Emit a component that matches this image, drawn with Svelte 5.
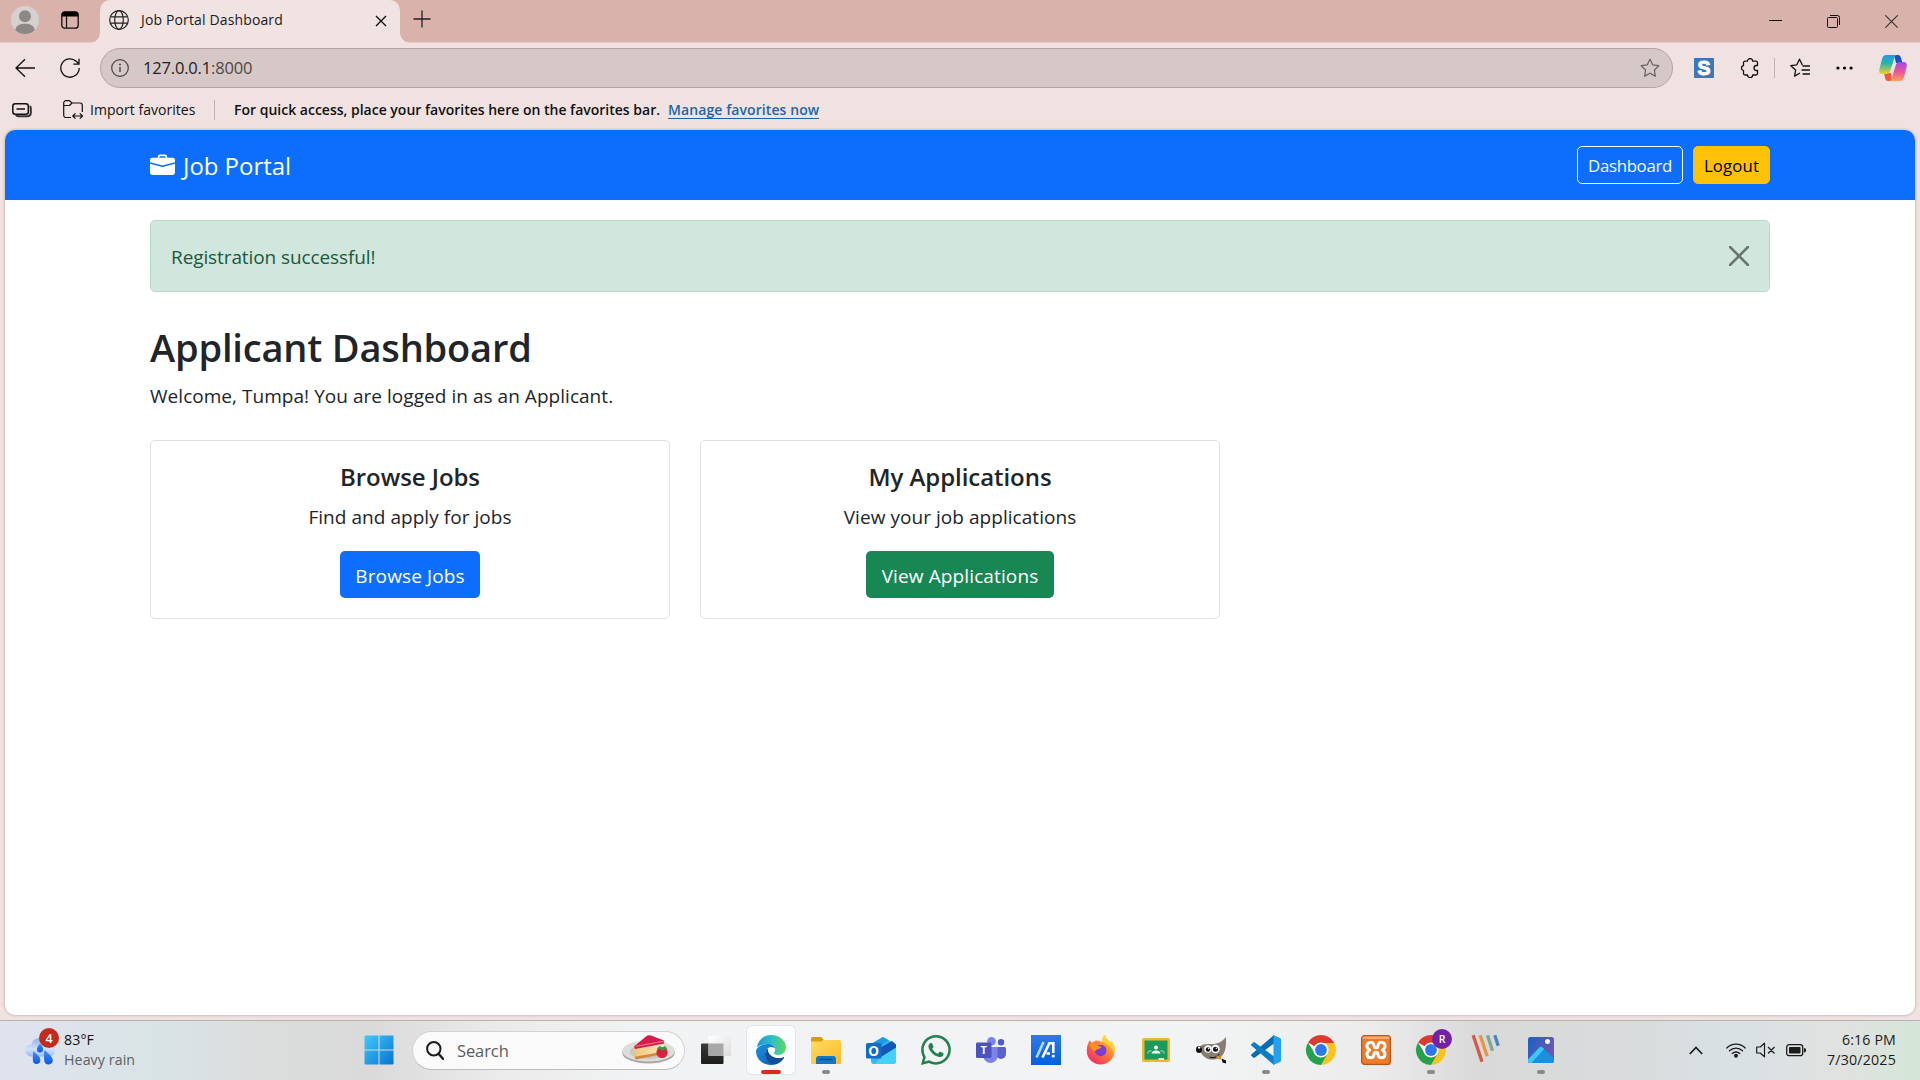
<script>
  const cards = [
    { title: 'Browse Jobs', text: 'Find and apply for jobs', action: 'Browse Jobs', kind: 'primary' },
    { title: 'My Applications', text: 'View your job applications', action: 'View Applications', kind: 'success' },
  ];
  const apps = [
    { id: 'taskview' },
    { id: 'edge', active: true },
    { id: 'explorer', open: true },
    { id: 'outlook' },
    { id: 'whatsapp' },
    { id: 'teams' },
    { id: 'asus' },
    { id: 'firefox' },
    { id: 'classroom' },
    { id: 'gimp' },
    { id: 'vscode', open: true },
    { id: 'chrome' },
    { id: 'xampp' },
    { id: 'chromeR', open: true },
    { id: 'stripes' },
    { id: 'photos', open: true },
  ];
</script>

{#snippet chrome()}
  <circle cx="15" cy="15" r="15" fill="#fff" />
  <path d="M15 15 2 7.500A15 15 0 0 1 28 7.500L28.300 8H15z" fill="#dc3a2e" />
  <path d="M15 8H28.300A15 15 0 0 1 15 30L21 18.500z" fill="#fcc31e" />
  <path d="M2 7.500A15 15 0 0 0 15 30L21.500 18.800 15 22 8.900 18.500z" fill="#25a04b" />
  <circle cx="15" cy="15" r="7.600" fill="#fff" />
  <circle cx="15" cy="15" r="5.900" fill="#2d78ee" />
{/snippet}

{#snippet appIcon(id)}
  <svg class="app-svg" viewBox="0 0 30 30">
    {#if id === 'taskview'}
      <rect x="0" y="8.500" width="22.500" height="20.500" rx="1" fill="url(#gDark)" />
      <rect x="7.500" y="1" width="22.500" height="20" rx="1" fill="url(#gGlass)" />
      <rect x="7.500" y="8.500" width="15" height="12.500" fill="#a8a8a8" />
    {:else if id === 'edge'}
      <path d="M1 12C2 5 8 0 15 0c8.500 0 15 5.500 15 12.500 0 4.500-3.500 7.500-7.500 7.500-3 0-4.500-1-4.500-2s1.200-1.500 1.200-3.500c0-3.200-3-5.500-7-5.500C7 9 3 11 1 12z" fill="url(#gEdgeTop)" />
      <path d="M12.200 9C5 9 0 13 0 16c0 8 6.500 14 15 14 1.500 0 3-.2 4.500-.8C14 29 9 25 9 19.500c0-4 2.500-6.500 5-7.500 1.500-.4 4 .2 5 1.500C18.500 10.800 15.500 9 12.200 9z" fill="url(#gEdgeBlue)" />
      <path d="M11.800 13.500C9.800 15 9 17.500 9 19.500 9 25 13.500 29.600 18.800 29.500c4-.8 7.300-3.300 9.200-6.600.3-.6-.2-1-.8-.7-1.200.5-2.800.9-4.700.9C16.500 23 11.500 19 11.800 13.500z" fill="#124f97" />
    {:else if id === 'explorer'}
      <path d="M0 4a2 2 0 0 1 2-2h8l3 3.500V9H0z" fill="#dd9b12" />
      <rect x="0" y="5" width="30" height="24" rx="1.500" fill="url(#gFolder)" />
      <path d="M0 4a2 2 0 0 1 2-2h8l2.500 2.500L10.500 6.500H0z" fill="#dd9b12" />
      <path d="M5 29v-5a3 3 0 0 1 3-3h14a3 3 0 0 1 3 3v5z" fill="#1378c8" />
      <path d="M9 24.500h12" stroke="#0b4f91" stroke-width="1.300" stroke-linecap="round" />
    {:else if id === 'outlook'}
      <path d="M5 9 17 2 30 9.500V26a3 3 0 0 1-3 3H8a3 3 0 0 1-3-3z" fill="#35b8f1" />
      <path d="M5 9 17 2l6 3.500L9 14z" fill="#1f9be6" />
      <path d="M12 14 26 6l4 3.500v3L15 22z" fill="#1257b8" />
      <path d="M15 22l15-9v13a3 3 0 0 1-3 3H9z" fill="#42d2f8" />
      <rect x="0" y="8" width="15.500" height="15.500" rx="1.500" fill="#0f6cc8" />
      <text x="7.600" y="20.500" class="glyph" font-size="13.500" text-anchor="middle">O</text>
    {:else if id === 'whatsapp'}
      <g transform="scale(1.875)"><path fill="#22804f" d="M13.601 2.326A7.850 7.850 0 0 0 7.994 0C3.627 0 .068 3.558.064 7.926c0 1.399.366 2.760 1.057 3.965L0 16l4.204-1.102a7.900 7.900 0 0 0 3.790.965h.004c4.368 0 7.926-3.558 7.930-7.930A7.900 7.900 0 0 0 13.600 2.326zM7.994 14.521a6.600 6.600 0 0 1-3.356-.92l-.24-.144-2.494.654.666-2.433-.156-.251a6.560 6.560 0 0 1-1.007-3.505c0-3.626 2.957-6.584 6.591-6.584a6.560 6.560 0 0 1 4.660 1.931 6.560 6.560 0 0 1 1.928 4.660c-.004 3.639-2.961 6.592-6.592 6.592m3.615-4.934c-.197-.099-1.170-.578-1.353-.646-.182-.065-.315-.099-.445.099-.133.197-.513.646-.627.775-.114.133-.232.148-.43.05-.197-.1-.836-.308-1.592-.985-.59-.525-.985-1.175-1.103-1.372-.114-.198-.011-.304.088-.403.087-.088.197-.232.296-.346.1-.114.133-.198.198-.33.065-.134.034-.248-.015-.347-.05-.099-.445-1.076-.612-1.470-.16-.389-.323-.335-.445-.34-.114-.007-.247-.007-.38-.007a.73.73 0 0 0-.529.247c-.182.198-.691.677-.691 1.654s.71 1.916.81 2.049c.098.133 1.394 2.132 3.383 2.992.47.205.84.326 1.129.418.475.152.904.129 1.246.08.38-.058 1.171-.48 1.338-.943.164-.464.164-.86.114-.943-.049-.084-.182-.133-.38-.232" /></g>
    {:else if id === 'teams'}
      <circle cx="15.500" cy="6.200" r="4.300" fill="#7b83eb" />
      <circle cx="25" cy="7.200" r="3.200" fill="#5059c9" />
      <path d="M20 12h8.500A1.500 1.500 0 0 1 30 13.500V19a5 5 0 0 1-10 0z" fill="#5b62cf" />
      <path d="M9 12h12.500v9a7 7 0 0 1-14 0z" fill="#7b83eb" />
      <rect x="0" y="7.500" width="15.500" height="15.500" rx="1.300" fill="#4b53bc" />
      <text x="7.700" y="19.300" class="glyph" font-size="11" text-anchor="middle">T</text>
    {:else if id === 'asus'}
      <rect width="30" height="30" fill="url(#gAsus)" />
      <g fill="none" stroke-width="2.600">
        <path d="M5.500 22.500 12.500 7" stroke="#b9d6fa" />
        <path d="M11.500 22.500 18.300 8.300h4V18M15.500 18.500h3.500" stroke="#fff" />
      </g>
      <circle cx="22.300" cy="21" r="1.600" fill="#fff" />
    {:else if id === 'firefox'}
      <path d="M4 5c.5 1.500 1 2 2 2.800C8 6 10 5.500 11 5.500c3 .5 4 1.500 5 1 0-3 1-5.300 3-6.500.5 2.800 3 5 5 7.500 1-.5 1.200-1.300 1.200-2C28 9 29 12 28.700 16c-.6 8-6.700 13.500-14 13.500S.8 24 .8 16C.8 11 2 8 4 5z" fill="url(#gFox)" />
      <path d="M16 6.500c0-3 1-5.300 3-6.500.5 2.800 3 5 5 7.500 1-.5 1.200-1.300 1.200-2C29 11 29 15 27.500 19c-.5-6-4-9-11.500-12.500z" fill="#ffd83c" opacity=".85" />
      <circle cx="14.700" cy="15.500" r="5.800" fill="#7a3fd0" />
      <path d="M3 9c3-1.500 6-1 9 2 1.500.5 3 .5 3.500 1.200-2 2.500-5.500 1.500-6.500 4-1.500-2-2.500-1-3.500-2.500z" fill="#ff9027" />
    {:else if id === 'classroom'}
      <rect x="1" y="3" width="28" height="24" rx="2" fill="#f0b82d" />
      <rect x="3.500" y="5.500" width="23" height="19" fill="#1b9b5b" />
      <circle cx="15" cy="12.500" r="2" fill="#fff" />
      <path d="M10.500 18.500c0-4 9-4 9 0z" fill="#fff" />
      <path d="M7 18.500c0-2.500 2-3 3.500-2.700M23 18.500c0-2.500-2-3-3.500-2.700" stroke="#7cc8a0" stroke-width="1.600" fill="none" />
      <rect x="17.500" y="23" width="5.500" height="1.800" fill="#fff" />
    {:else if id === 'gimp'}
      <path d="M2.500 12.500 7 9.500c3-1 6-.5 9.500-.5C21 9 26 7 30 2c.2 8 0 13-3 17.500-2.500 4-7 5.500-12 5-6-.5-10-5-12.500-12z" fill="#877d70" />
      <ellipse cx="3" cy="14.500" rx="3" ry="3.500" fill="#111" />
      <circle cx="3.200" cy="12.600" r="1.200" fill="#fff" />
      <circle cx="12" cy="14" r="3.700" fill="#fff" />
      <circle cx="19.500" cy="14" r="4.200" fill="#fff" />
      <circle cx="12" cy="14.500" r="2.200" fill="#111" />
      <circle cx="19.500" cy="14.300" r="2.500" fill="#111" />
      <circle cx="12.700" cy="13.600" r=".8" fill="#fff" />
      <circle cx="20.300" cy="13.300" r=".8" fill="#fff" />
      <path d="M13.500 22c4 1.500 7.500 0 9.500-3" stroke="#222" stroke-width="1.300" fill="none" />
      <path d="m20.500 21.300 4.500 2.200" stroke="#e08a2e" stroke-width="2.600" />
      <path d="m25.500 23.500 4.500 2v3l-3.500-1z" fill="#111" />
    {:else if id === 'vscode'}
      <path d="M.3 19.500a1 1 0 0 0 0 1.300l2 1.800a1.300 1.300 0 0 0 1.600 0L23 8.500V0z" fill="#0a6cb0" />
      <path d="M.3 10.500a1 1 0 0 1 0-1.300l2-1.800a1.300 1.300 0 0 1 1.600 0L23 21.500V30z" fill="#0b7dc4" />
      <path d="M22.500 0 29 3a1.700 1.700 0 0 1 1 1.600v20.800a1.700 1.700 0 0 1-1 1.600l-6.500 3z" fill="#25a0ee" />
    {:else if id === 'chrome'}
      {@render chrome()}
    {:else if id === 'xampp'}
      <rect x=".6" y=".6" width="28.800" height="28.800" rx="3" fill="#ef7a27" stroke="#b5561a" stroke-width="1.200" />
      <rect x="1.500" y="1.500" width="27" height="2.500" rx="1.200" fill="#f6ab74" />
      <path d="M15 12.800c-1.500 0-2-.8-2-2 0-4.600-7-4.600-7 .2 0 2.300 1.200 3.200 2.800 4-1.600.8-2.800 1.900-2.800 4.200 0 4.600 7 4.800 7 .3 0-1.400.6-2.200 2-2.200s2 .8 2 2.200c0 4.500 7 4.300 7-.3 0-2.300-1.200-3.400-2.800-4.200 1.600-.8 2.800-1.700 2.800-4 0-4.800-7-4.800-7-.2 0 1.200-.5 2-2 2z" fill="none" stroke="#fff" stroke-width="3" stroke-linejoin="round" />
    {:else if id === 'chromeR'}
      {@render chrome()}
      <circle cx="26" cy="4" r="10" fill="#7521a3" />
      <text x="26" y="7.800" class="glyph light" font-size="10.500" text-anchor="middle">R</text>
    {:else if id === 'stripes'}
      <g stroke-width="3.300">
        <path d="m2.200.3 8.800 26.500" stroke="#d65a43" />
        <path d="m9.200.3 7 21" stroke="#e6954c" />
        <path d="m16.500.3 5 15.500" stroke="#79ab94" />
        <path d="m23.800.3 3.400 10.500" stroke="#4e82bd" />
      </g>
    {:else if id === 'photos'}
      <rect x="2" y="2" width="26" height="26" rx="2.500" fill="url(#gPhoto)" />
      <path d="M2 24.500 13.500 12.500a2.200 2.200 0 0 1 3 0L28 23v2.500a2.500 2.500 0 0 1-2.500 2.500h-21A2.500 2.500 0 0 1 2 25.500z" fill="#1b8fe0" />
      <path d="M2 24.500 13.500 12.500a2.200 2.200 0 0 1 3 0L18 14 5.500 28H4.500A2.500 2.500 0 0 1 2 25.500z" fill="#3cc8f8" />
      <circle cx="21.500" cy="6.500" r="2.500" fill="#f2f4ff" />
    {/if}
  </svg>
{/snippet}

<svg class="defs" width="0" height="0">
  <defs>
    <linearGradient id="gDark" x2="0" y2="1"><stop offset="0" stop-color="#3a3a38" /><stop offset="1" stop-color="#1c1c1b" /></linearGradient>
    <linearGradient id="gGlass" x2="1" y2="1"><stop offset="0" stop-color="#fff" /><stop offset="1" stop-color="#dcdcdc" /></linearGradient>
    <linearGradient id="gEdgeTop"><stop offset=".1" stop-color="#1e9fdc" /><stop offset=".5" stop-color="#2bbfc6" /><stop offset="1" stop-color="#5fd95b" /></linearGradient>
    <linearGradient id="gEdgeBlue" x2="1" y2="1"><stop offset="0" stop-color="#1a93e0" /><stop offset="1" stop-color="#0a5cb8" /></linearGradient>
    <linearGradient id="gFolder" x2="1" y2="1"><stop offset="0" stop-color="#ffdb62" /><stop offset="1" stop-color="#fbbb2a" /></linearGradient>
    <linearGradient id="gAsus" x2="0" y2="1"><stop offset="0" stop-color="#2f7be8" /><stop offset="1" stop-color="#0560dc" /></linearGradient>
    <linearGradient id="gFox" x1="1" x2=".2" y2="1"><stop offset="0" stop-color="#ffe33a" /><stop offset=".45" stop-color="#ff8a2c" /><stop offset="1" stop-color="#f0256e" /></linearGradient>
    <linearGradient id="gPhoto" x2="1" y2=".4"><stop offset="0" stop-color="#1763c6" /><stop offset="1" stop-color="#7055ae" /></linearGradient>
    <linearGradient id="gWin" x2="1" y2="1"><stop offset="0" stop-color="#45c8fa" /><stop offset="1" stop-color="#0573d2" /></linearGradient>
    <linearGradient id="gCloud" x2="0" y2="1"><stop offset="0" stop-color="#8fb0ee" /><stop offset=".6" stop-color="#d3e1fa" /><stop offset="1" stop-color="#9bbaf0" /></linearGradient>
    <linearGradient id="gDrop" x2="0" y2="1"><stop offset="0" stop-color="#3f8df5" /><stop offset="1" stop-color="#0a5be8" /></linearGradient>
    <linearGradient id="gCopA" x2="0" y2="1"><stop offset="0" stop-color="#1c9cec" /><stop offset=".45" stop-color="#28b5a8" /><stop offset="1" stop-color="#f2d02c" /></linearGradient>
    <linearGradient id="gCopB" x2="0" y2="1"><stop offset="0" stop-color="#a04be8" /><stop offset=".5" stop-color="#e8559c" /><stop offset="1" stop-color="#fba25a" /></linearGradient>
    <linearGradient id="gCake" x2="1"><stop offset="0" stop-color="#f3c678" /><stop offset="1" stop-color="#fbe9c0" /></linearGradient>
  </defs>
</svg>

<div class="screen">
  <header class="tabstrip">
    <svg class="avatar" viewBox="0 0 28 28"><circle cx="14" cy="14" r="14" fill="#d5d1cd" /><circle cx="14" cy="10.300" r="6" fill="#8c8884" /><path d="M4.200 24C5 19.500 9 17.800 14 17.800s9 1.700 9.800 6.200A14 14 0 0 1 4.200 24z" fill="#8c8884" /></svg>
    <svg class="workspace" viewBox="0 0 18 18"><rect x=".8" y=".8" width="16.400" height="16.400" rx="3" fill="none" stroke="#111" stroke-width="1.300" /><path d="M.8 5.500V3.500A2.700 2.700 0 0 1 3.500.8h11a2.700 2.700 0 0 1 2.700 2.700v2z" fill="#000" /><path d="M5.500 5v12" stroke="#111" stroke-width="1.200" /></svg>
    <div class="tab">
      <svg class="i20" viewBox="0 0 20 20" fill="none" stroke="#222" stroke-width="1.200"><circle cx="10" cy="10" r="9.300" /><ellipse cx="10" cy="10" rx="4.300" ry="9.300" /><path d="M1.500 6.800h17M1.500 13.200h17" /></svg>
      <span class="tab-title">Job Portal Dashboard</span>
      <svg class="tab-x" viewBox="0 0 12 12"><path d="m1 1 10 10M11 1 1 11" stroke="#111" stroke-width="1.400" /></svg>
    </div>
    <svg class="plus" viewBox="0 0 18 18"><path d="M9 .5v17M.5 9h17" stroke="#222" stroke-width="1.300" /></svg>
    <div class="window-controls">
      <svg viewBox="0 0 13 13"><path d="M0 5.500h13" stroke="#111" /></svg>
      <svg viewBox="0 0 13 13" fill="none" stroke="#111"><rect x=".5" y="2.500" width="10" height="10" rx="1" /><path d="M3 .5h7.500a2 2 0 0 1 2 2V10" /></svg>
      <svg viewBox="0 0 13 13"><path d="m.3.3 12.400 12.400M12.700.3.3 12.700" stroke="#333" stroke-width="1.100" /></svg>
    </div>
  </header>

  <div class="toolbar">
    <svg class="i20" viewBox="0 0 20 20" fill="none" stroke="#111" stroke-width="1.300"><path d="M20 10H1M10 1.200 1 10l9 8.800" /></svg>
    <svg class="i20 reload" viewBox="0 0 20 20" fill="none" stroke="#111" stroke-width="1.300"><path d="M19.200 10A9.200 9.200 0 1 1 16.500 3.500L18.500 5.500M19 .8v5.400h-5.600" /></svg>
    <div class="address">
      <svg class="info" viewBox="0 0 18 18"><circle cx="9" cy="9" r="8.300" fill="none" stroke="#444" stroke-width="1.200" /><path d="M9 8v5" stroke="#444" stroke-width="1.400" /><circle cx="9" cy="5.500" r="1" fill="#444" /></svg>
      <span class="url">127.0.0.1<span class="port">:8000</span></span>
      <svg class="i20 star" viewBox="0 0 20 20" fill="none" stroke="#6b6161" stroke-width="1.200" stroke-linejoin="round"><path d="m10 1.200 2.700 5.600 6.100.9-4.400 4.300 1 6.100L10 15.200 4.600 18.100l1-6.100L1.200 7.700l6.100-.9z" /></svg>
    </div>
    <svg class="i20 snag" viewBox="0 0 20 20"><rect width="20" height="20" fill="#3a78bd" /><text x="10" y="17" class="glyph snag-letter" font-size="19.500" text-anchor="middle">S</text></svg>
    <svg class="i20 puzzle" viewBox="0 0 20 20" fill="none" stroke="#111" stroke-width="1.300" stroke-linejoin="round"><path d="M7.500 3.200a2.600 2.600 0 0 1 5.200 0H16a1.500 1.500 0 0 1 1.500 1.500v2.800h-1a2.500 2.500 0 0 0 0 5h1v3A1.500 1.500 0 0 1 16 17h-3.300a2.600 2.600 0 0 1-5.200 0H5a1.500 1.500 0 0 1-1.500-1.500v-2.900a2.600 2.600 0 0 1 0-5.100V4.700A1.500 1.500 0 0 1 5 3.200z" /></svg>
    <i class="sep"></i>
    <svg class="i20 favs" viewBox="0 0 20 20" fill="none" stroke="#111" stroke-width="1.300" stroke-linejoin="round" stroke-linecap="round"><path d="M9.500 15.300 4.600 18.100l1-6.100L.8 7.700l6-.9L9.500 1.200l2.700 5.400M13 8h6.500M12 12h7.500M13 16h6.500" /></svg>
    <svg class="dots" viewBox="0 0 17 4"><circle cx="1.900" cy="2" r="1.600" /><circle cx="8.500" cy="2" r="1.600" /><circle cx="15.100" cy="2" r="1.600" /></svg>
    <svg class="copilot" viewBox="0 0 28 26">
      <path d="M15 0h4c2 0 2.500 1.500 3 3l1.500 5H17z" fill="#1b4fc4" />
      <path d="M13 26H9c-2 0-2.500-1.500-3-3l-1-5h7z" fill="#ee5a3c" />
      <path d="M7.500 0H18c-1.500 0-2.300 1.500-3 4l-3.500 11c-.7 2.500-1.800 4-4 4H3.500C.8 19-.3 17.500.3 14.500L3 4C3.800 1.500 5 0 7.500 0z" fill="url(#gCopA)" />
      <path d="M20.500 26H10c1.500 0 2.300-1.500 3-4l3.500-11c.7-2.500 1.800-4 4-4h4c2.700 0 3.800 1.500 3.200 4.500L25 22c-.8 2.500-2 4-4.500 4z" fill="url(#gCopB)" />
    </svg>
  </div>

  <div class="favorites">
    <svg class="collections" viewBox="0 0 20 15" fill="none" stroke="#111"><rect x=".8" y=".8" width="15.500" height="10.500" rx="2.500" stroke-width="1.500" /><path d="M4.500 6h8.500" stroke-width="1.500" /><path d="M17.800 3c.9.700 1 1.300 1 2.500V9.500c0 2.300-1.400 3.700-3.700 3.700H6.500c-1.300 0-2-.2-2.700-1" stroke-width="2" stroke="#333" /></svg>
    <svg class="import" viewBox="0 0 20 20" fill="none" stroke="#111" stroke-width="1.200" stroke-linejoin="round"><path d="M8 17.500H3A2.300 2.300 0 0 1 .7 15.200V3A2.300 2.300 0 0 1 3 .7h3.500L9 3h8a2.300 2.300 0 0 1 2.300 2.300V12M.7 5.500h5.800L9 3M10 16h9.300M12.500 13.300 9.800 16l2.700 2.700M16.800 13.300l2.700 2.700-2.700 2.700" /></svg>
    <span class="imp">Import favorites</span>
    <i class="sep"></i>
    <span class="hint">For quick access, place your favorites here on the favorites bar.</span>
    <a class="manage" href="#favorites">Manage favorites now</a>
  </div>

  <main class="page">
    <nav>
      <div class="container nav-row">
        <div class="brand">
          <svg viewBox="0 0 16 16" fill="#fff"><path d="M6.500 1A1.500 1.500 0 0 0 5 2.500V3H1.500A1.500 1.500 0 0 0 0 4.500v1.384l7.614 2.030a1.500 1.500 0 0 0 .772 0L16 5.884V4.500A1.500 1.500 0 0 0 14.500 3H11v-.5A1.500 1.500 0 0 0 9.500 1zm0 1h3a.5.5 0 0 1 .5.5V3H6v-.5a.5.5 0 0 1 .5-.5" /><path d="M0 12.500A1.500 1.500 0 0 0 1.500 14h13a1.500 1.500 0 0 0 1.500-1.500V6.850L8.129 8.947a.5.5 0 0 1-.258 0L0 6.850z" /></svg>
          <span>Job Portal</span>
        </div>
        <button class="nav-btn dash">Dashboard</button>
        <button class="nav-btn logout">Logout</button>
      </div>
    </nav>
    <div class="container">
      <div class="alert">
        <span>Registration successful!</span>
        <svg viewBox="0 0 20 20"><path d="m1 1 18 18M19 1 1 19" stroke="#68746e" stroke-width="2.500" stroke-linecap="round" /></svg>
      </div>
      <h2>Applicant Dashboard</h2>
      <p class="welcome">Welcome, Tumpa! You are logged in as an Applicant.</p>
      <div class="cards">
        {#each cards as card}
          <section class="card {card.kind}">
            <h5>{card.title}</h5>
            <p>{card.text}</p>
            <button>{card.action}</button>
          </section>
        {/each}
      </div>
    </div>
  </main>

  <footer class="taskbar">
    <div class="weather">
      <svg class="cloud" viewBox="0 0 35 38">
        <path d="M6 28.500a6 6 0 0 1 .5-12C7.500 12 11 10 15 10c5 0 8 3 9 7 4 0 6 2.500 6 5.500s-2.500 6-6 6z" fill="url(#gCloud)" />
        <g fill="url(#gDrop)"><path d="M15 15.500c2 2.500 3 4 3 6a3 3 0 0 1-6 0c0-2 1-3.500 3-6z" /><path d="M8.500 23c3 3.500 6.800 5.500 6.800 9a3.700 3.700 0 0 1-7.400.5c-.2-3 0-6 .6-9.500z" /><path d="M19.500 22c4 4 8.300 6.500 8.300 10.500a4.300 4.300 0 0 1-8.500.5c-.4-3.500-.3-7 .2-11z" /></g>
        <circle cx="24" cy="10" r="10" fill="#c42b1c" />
        <text x="24" y="14.500" class="glyph light" font-size="12.500" text-anchor="middle">4</text>
      </svg>
      <div class="weather-text"><span class="temp">83°F</span><span class="cond">Heavy rain</span></div>
    </div>
    <div class="dock">
      <div class="tile start"><svg class="app-svg" viewBox="0 0 30 30"><path d="M1.500.5H14.500v14H.5V1.500a1 1 0 0 1 1-1zM15.500.5h13a1 1 0 0 1 1 1v13h-14zM.5 15.500h14v14h-13a1 1 0 0 1-1-1zM15.500 15.500h14v13a1 1 0 0 1-1 1h-13z" fill="url(#gWin)" /></svg></div>
      <div class="search">
        <svg class="lens" viewBox="0 0 18 19" fill="none" stroke="#1b1b1b" stroke-width="2"><circle cx="7.800" cy="7.800" r="6.700" /><path d="m12.500 12.800 4.500 5" stroke-width="2.400" stroke-linecap="round" /></svg>
        <span class="s-label">Search</span>
        <svg class="cake" viewBox="0 0 53 30">
          <ellipse cx="26.500" cy="17.800" rx="26.300" ry="10.700" fill="#a9a7a3" />
          <ellipse cx="26.500" cy="16" rx="26.300" ry="10.500" fill="#dedcd8" />
          <ellipse cx="26.500" cy="17" rx="19" ry="7" fill="#c9c7c3" />
          <path d="M12.500 11.500 42 7v12L14 24.500l-1.500-2z" fill="url(#gCake)" />
          <path d="M12.500 22 14 24.500 42 19v-2.500L14 21.500z" fill="#c98a45" />
          <path d="M12 11.500 24 1.500c1.500-1.300 3-1.500 5-1L42 5.500v3L13 14z" fill="#d91a4d" />
          <path d="M14 10.800 42 5.500v1.300L13.500 12z" fill="#f4708f" />
          <circle cx="40" cy="17.500" r="5.600" fill="#d2243f" />
          <path d="M34.500 13.500 38 11l2 1.500 3-1.500 2.500 3-3 .2-2 1.500-2-1.500z" fill="#3d9a44" />
        </svg>
      </div>
      {#each apps as app}
        <div class="tile" class:active={app.active} class:open={app.open}>{@render appIcon(app.id)}</div>
      {/each}
    </div>
    <div class="tray">
      <svg class="chev" viewBox="0 0 14 9"><path d="m.8 8 6.200-6.500L13.200 8" fill="none" stroke="#1b1b1b" stroke-width="1.700" /></svg>
      <svg class="wifi" viewBox="0 0 20 16" fill="none" stroke="#1b1b1b" stroke-width="1.300" stroke-linecap="round"><path d="M.8 6a13 13 0 0 1 18.400 0M3.500 8.800a9.200 9.200 0 0 1 13 0M6.300 11.500a5.300 5.300 0 0 1 7.400 0" /><circle cx="10" cy="13.800" r="1.300" fill="#1b1b1b" /></svg>
      <svg class="speaker" viewBox="0 0 20 16" fill="none" stroke="#1b1b1b" stroke-width="1.200" stroke-linejoin="round"><path d="M.7 5h3.500L8.500 1.200v13.600L4.200 11H.7zM12 5l6.500 6.500M18.500 5 12 11.500" /></svg>
      <svg class="battery" viewBox="0 0 20 13"><rect x=".7" y=".7" width="16" height="11" rx="2.500" fill="none" stroke="#1b1b1b" stroke-width="1.300" /><rect x="3" y="3" width="11.500" height="6.500" rx=".8" fill="#1b1b1b" /><path d="M18 4v4.500c1.300 0 2-.8 2-2.200S19.300 4 18 4z" fill="#1b1b1b" /></svg>
      <div class="clock"><span class="time">6:16 PM</span><span class="date">7/30/2025</span></div>
    </div>
  </footer>
</div>

<style>
  :global(body) { margin: 0; overflow: hidden; }
  .screen { box-sizing: border-box; width: 1920px; height: 1080px; display: flex; flex-direction: column; background: #f0e2e0; font-family: 'Open Sans', 'Noto Sans', sans-serif; color: #212529; }
  .screen * { box-sizing: border-box; }
  .screen svg { display: block; flex: none; }
  .defs { position: absolute; }
  button { font: inherit; margin: 0; padding: 0; cursor: pointer; white-space: nowrap; }
  span, a, h2, h5, p { white-space: nowrap; }
  .i20 { width: 20px; height: 20px; }
  .glyph { fill: #fff; font-family: 'Open Sans', sans-serif; font-weight: 700; }
  .glyph.light { font-weight: 600; }
  .snag-letter { font-family: 'Liberation Sans', sans-serif; stroke: #fff; stroke-width: 1px; }

  .tabstrip { height: 43px; flex: none; display: flex; align-items: flex-start; background: #d8b2ab; border-bottom: 1px solid #e3cbc7; }
  .avatar { width: 28px; height: 28px; margin: 6px 0 0 11px; }
  .workspace { width: 18px; height: 18px; margin: 11px 0 0 22px; }
  .tab { position: relative; width: 300px; height: 43px; margin-left: 21px; padding: 0 13px 3px 9px; display: flex; align-items: center; background: #f0e3e1; border-radius: 10px 10px 0 0; }
  .tab::before, .tab::after { content: ''; position: absolute; bottom: 0; width: 10px; height: 10px; }
  .tab::before { left: -10px; background: radial-gradient(circle at 0 0, transparent 9.500px, #f0e3e1 10px); }
  .tab::after { right: -10px; background: radial-gradient(circle at 100% 0, transparent 9.500px, #f0e3e1 10px); }
  .tab-title { margin-left: 12px; font-size: 14px; line-height: 20px; letter-spacing: .14px; color: #1a1a1a; }
  .tab-x { width: 12px; height: 12px; margin-left: auto; margin-top: 1px; }
  .plus { width: 18px; height: 18px; margin: 10px 0 0 13px; }
  .window-controls { margin-left: auto; padding: 15px 22px 0 0; display: flex; gap: 45px; }
  .window-controls svg { width: 13px; height: 13px; }

  .toolbar { height: 50px; flex: none; display: flex; align-items: center; padding-left: 15px; }
  .reload { margin-left: 25px; }
  .address { width: 1573px; height: 40px; margin-left: 20px; padding: 0 12px 0 10px; display: flex; align-items: center; background: #d6c8c6; border: 1px solid #b3a5a3; border-radius: 20px; }
  .info { width: 18px; height: 18px; }
  .url { margin-left: 14px; font-size: 16.500px; line-height: 20px; letter-spacing: -.18px; color: #222; }
  .port { color: #4d4747; }
  .star { margin-left: auto; }
  .snag { margin-left: 21px; }
  .puzzle { margin-left: 26px; }
  .sep { width: 1px; height: 20px; background: #bdb0af; }
  .toolbar .sep { margin-left: 14px; }
  .favs { margin-left: 15px; }
  .dots { width: 17px; height: 4px; margin-left: 26px; }
  .copilot { width: 28px; height: 26px; margin-left: 26px; }

  .favorites { height: 37px; flex: none; display: flex; align-items: center; padding: 0 0 3px 12px; font-size: 14px; line-height: 20px; color: #111; }
  .collections { width: 20px; height: 15px; }
  .import { width: 20px; height: 20px; margin-left: 31px; }
  .imp { width: 124px; margin-left: 7px; letter-spacing: .03px; }
  .hint { width: 425px; margin-left: 19px; font-weight: 600; }
  .manage { margin-left: 9px; font-weight: 600; letter-spacing: .09px; color: #1c66a8; text-decoration: none; line-height: 17px; border-bottom: 1px solid #1c66a8; }

  .page { width: 1910px; height: 885px; flex: none; margin: 0 5px; background: #fff; border-radius: 10px; overflow: hidden; box-shadow: 0 0 3px #a99b99; }
  nav { background: #0d6efd; }
  .container { width: 1620px; margin: 0 auto; font-size: 19px; line-height: 30px; }
  .nav-row { height: 70px; display: flex; align-items: center; gap: 10px; }
  .brand { display: flex; align-items: center; margin-right: auto; font-size: 24px; color: #fff; }
  .brand svg { width: 25px; height: 25px; margin-right: 8px; }
  .brand span { padding-top: 1px; letter-spacing: -.05px; }
  .nav-btn { height: 38px; border-radius: 5px; font-size: 16.800px; line-height: 24px; padding-top: 1px; }
  .dash { width: 106px; border: 1px solid #f8f9fa; background: transparent; color: #f8f9fa; letter-spacing: -.3px; }
  .logout { width: 77px; border: 1px solid #ffc107; background: #ffc107; color: #000; letter-spacing: .15px; }
  .alert { height: 72px; margin-top: 20px; padding: 0 20px; display: flex; align-items: center; justify-content: space-between; background: #d1e7dd; border: 1px solid #b6d9c9; border-radius: 5px; color: #1a5a3c; letter-spacing: -.1px; }
  .alert span { padding-top: 2px; }
  .alert svg { width: 20px; height: 20px; }
  h2 { margin: 31px 0 10px; font-size: 38px; line-height: 48px; font-weight: 600; letter-spacing: -.18px; }
  p { margin: 0; }
  .welcome { letter-spacing: .04px; }
  .cards { display: flex; gap: 30px; margin-top: 29px; }
  .card { width: 520px; height: 179px; border: 1px solid #dfe0e1; border-radius: 5px; display: flex; flex-direction: column; align-items: center; padding: 21px 20px 20px; }
  h5 { margin: 0 0 10px; font-size: 24px; line-height: 30px; font-weight: 600; letter-spacing: -.06px; }
  .card p { letter-spacing: .05px; }
  .card button { width: 140px; height: 47px; flex: none; margin-top: 19px; padding-top: 2px; border: 0; border-radius: 5px; background: #0d6efd; color: #fff; letter-spacing: .12px; }
  .card.success button { width: 188px; background: #198754; }

  .taskbar { height: 60px; flex: none; margin-top: 5px; padding-bottom: 1px; display: flex; align-items: center; border-top: 1px solid #b8b3b3; background: linear-gradient(90deg, #dfe3ee 0, #d9e4e6 150px, #dbdddd 260px, #dadada 370px, #ebebeb 500px, #f1f2f3 640px, #f2f3f4 1200px, #ececec 1370px, #d9d9d9 1480px, #d9dcdd 1640px, #d9e1e4 1730px, #e0e2e0 1840px, #d4e6d8 1920px); }
  .weather { width: 355px; display: flex; align-items: center; padding-left: 25px; }
  .cloud { width: 35px; height: 38px; margin-bottom: 6px; }
  .weather-text, .clock { display: flex; flex-direction: column; font-size: 14.200px; line-height: 20px; margin-bottom: 1px; }
  .weather-text { margin-left: 4px; }
  .temp { letter-spacing: .1px; color: #111; }
  .cond { letter-spacing: .1px; color: #5b5f62; }
  .dock { display: flex; align-items: center; gap: 7px; }
  .tile { position: relative; width: 48px; height: 48px; display: flex; align-items: center; justify-content: center; border-radius: 5px; }
  .start { margin-right: 2px; }
  .app-svg { width: 30px; height: 30px; overflow: visible; }
  .tile.active { background: #fbfcfd; box-shadow: 0 0 0 1px #e4e5e7; }
  .tile.active::after, .tile.open::after { content: ''; position: absolute; bottom: 0; width: 8px; height: 4px; border-radius: 2px; background: #8a8a8a; }
  .tile.active::after { width: 20px; background: #dd2a20; }
  .search { width: 273px; height: 39px; display: flex; align-items: center; padding: 0 9px 0 13px; border-radius: 20px; background: #fafafa; border: 1px solid #d2d2d2; border-bottom-color: #bcbcbc; }
  .lens { width: 18px; height: 19px; }
  .s-label { margin-left: 13px; font-size: 16.500px; color: #5d5d5d; letter-spacing: -.1px; }
  .cake { width: 53px; height: 30px; margin-left: auto; }
  .tray { margin-left: auto; padding-right: 24px; display: flex; align-items: center; }
  .chev { width: 14px; height: 9px; }
  .wifi { width: 20px; height: 16px; margin-left: 23px; }
  .speaker { width: 20px; height: 16px; margin-left: 10px; }
  .battery { width: 20px; height: 13px; margin-left: 10px; }
  .clock { width: 70px; margin-left: 20px; text-align: right; align-items: flex-end; color: #1b1b1b; }
  .time { letter-spacing: .15px; }
  .date { letter-spacing: .2px; }
</style>
